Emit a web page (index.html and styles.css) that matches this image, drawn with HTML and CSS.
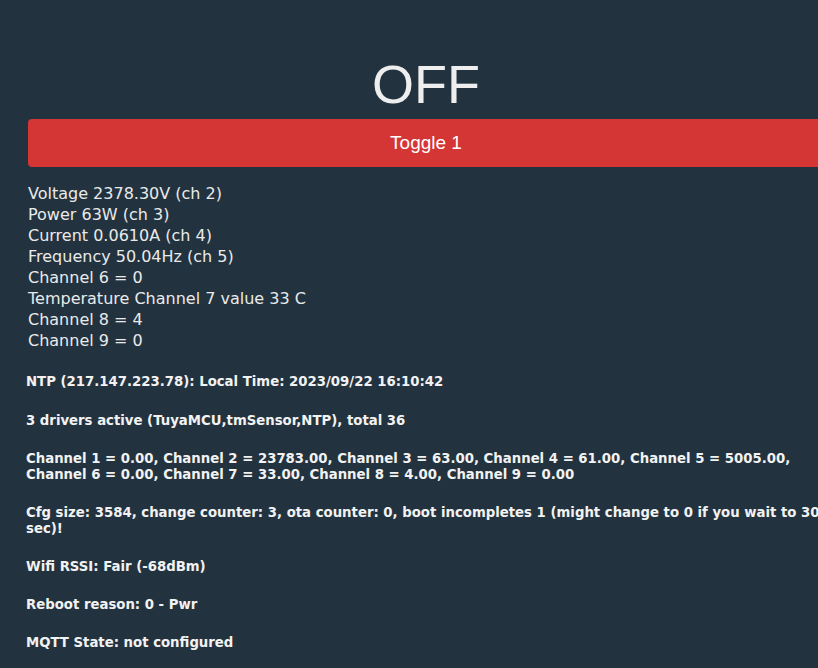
FILE: index.html
```html
<!DOCTYPE html>
<html>

<head>
  <title>Device status</title>
  <link rel="stylesheet" href="styles.css">
</head>

<body>
  <div class="page">
    <div class="state">OFF</div>
    <button class="toggle bred">Toggle 1</button>

    <div class="sensors">
      <div>Voltage 2378.30V (ch 2)</div>
      <div>Power 63W (ch 3)</div>
      <div>Current 0.0610A (ch 4)</div>
      <div>Frequency 50.04Hz (ch 5)</div>
      <div>Channel 6 = 0</div>
      <div>Temperature Channel 7 value 33 C</div>
      <div>Channel 8 = 4</div>
      <div>Channel 9 = 0</div>
    </div>

    <h5 class="ntp">NTP (217.147.223.78): Local Time: 2023/09/22 16:10:42</h5>
    <h5>3 drivers active (TuyaMCU,tmSensor,NTP), total 36</h5>
    <h5>Channel 1 = 0.00, Channel 2 = 23783.00, Channel 3 = 63.00, Channel 4 = 61.00, Channel 5 = 5005.00, Channel 6 = 0.00, Channel 7 = 33.00, Channel 8 = 4.00, Channel 9 = 0.00</h5>
    <h5>Cfg size: 3584, change counter: 3, ota counter: 0, boot incompletes 1 (might change to 0 if you wait to 30 sec)!</h5>
    <h5>Wifi RSSI: Fair (-68dBm)</h5>
    <h5>Reboot reason: 0 - Pwr</h5>
    <h5>MQTT State: not configured</h5>
  </div>
</body>

</html>
```

FILE: styles.css
```css
* {
  box-sizing: border-box;
}

body {
  margin: 0;
  background-color: #22333f;
  color: #eaeaea;
  font-family: "DejaVu Sans", Verdana, sans-serif;
}

.page {
  width: 796px;
  margin-left: 28px;
  padding-top: 53px;
}

.state {
  font-family: "Liberation Sans", Arial, sans-serif;
  font-size: 54px;
  line-height: 62px;
  text-align: center;
  color: #eeeeee;
}

.toggle {
  display: block;
  width: 100%;
  height: 48px;
  margin-top: 4px;
  border: 0;
  border-radius: 4px;
  color: #fff;
  font-family: "Liberation Sans", Arial, sans-serif;
  font-size: 19px;
  cursor: pointer;
}

.bred {
  background-color: #d43535;
}

.sensors {
  margin-top: 16px;
  padding-bottom: 1px;
  font-size: 16px;
  line-height: 21px;
}

h5 {
  font-family: "DejaVu Sans", sans-serif;
  font-weight: bold;
  font-size: 13.28px;
  line-height: 16px;
  margin: 22px 0 22px -2px;
  color: #f2f2f2;
}

h5.ntp {
  margin-bottom: 23px;
}
```
